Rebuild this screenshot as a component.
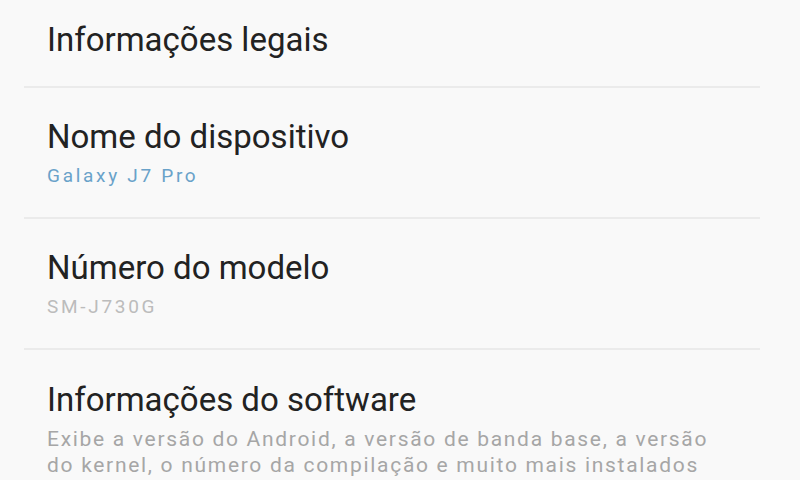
export default function App() {
  const rows = [
    { title: 'Nome do dispositivo', sub: 'Galaxy J7 Pro', subClass: 'text-[#69a2c9]' },
    { title: 'Número do modelo', sub: 'SM-J730G', subClass: 'text-[#bcbcbc]' },
  ];

  return (
    <div
      className="w-[800px] h-[480px] overflow-hidden bg-[#f9f9f9]"
      style={{ fontFamily: 'Roboto, "Noto Sans", sans-serif' }}
    >
      {/* Item cortado no topo */}
      <div className="h-[86px] pl-[47px] pt-[22px]">
        <p className="text-[33px] leading-[36px] text-[#222]">Informações legais</p>
      </div>
      <div className="ml-[24px] mr-[40px] h-[2px] bg-[#ebebeb]" />

      {rows.map((row) => (
        <div key={row.title}>
          <div className="h-[129px] pl-[47px] pt-[31px]">
            <p className="text-[33px] leading-[36px] text-[#222]">{row.title}</p>
            <p className={`text-[19px] leading-[24px] mt-[9px] tracking-[2.7px] ${row.subClass}`}>{row.sub}</p>
          </div>
          <div className="ml-[24px] mr-[40px] h-[2px] bg-[#ebebeb]" />
        </div>
      ))}

      {/* Informações do software */}
      <div className="pl-[47px] pr-[63px] pt-[32px]">
        <p className="text-[33px] leading-[36px] text-[#222]">Informações do software</p>
        <p className="text-[21px] leading-[26px] mt-[8px] tracking-[1.7px] text-[#a6a6a6]">
          Exibe a versão do Android, a versão de banda base, a versão do kernel, o número da compilação e muito mais instalados
        </p>
      </div>
    </div>
  );
}
